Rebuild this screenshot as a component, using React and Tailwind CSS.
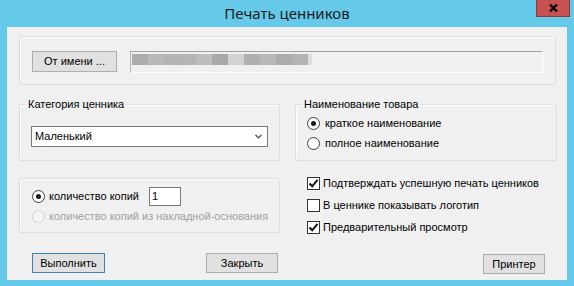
const blur = [
  "bg-[#acacac]",
  "bg-[#b9b9b9]",
  "bg-[#b4b4b4]",
  "bg-[#b5b5b5]",
  "bg-[#bdbdbd]",
  "bg-[#a9a9a9]",
  "bg-[#d2d2d2]",
  "bg-[#b0b0b0]",
  "bg-[#b8b8b8]",
  "bg-[#acacac]",
  "bg-[#b3b3b3]",
];

const Radio = ({ checked, disabled }) => (
  <span
    className={
      disabled
        ? "flex w-[13px] h-[13px] shrink-0 rounded-full border border-[#cfcfcf] bg-[#f4f4f4]"
        : "flex w-[13px] h-[13px] shrink-0 items-center justify-center rounded-full border border-[#3c3c3c] bg-white"
    }
  >
    {checked && <span className="w-[5px] h-[5px] rounded-full bg-[#1a1a1a]" />}
  </span>
);

const Check = ({ checked }) => (
  <span className="flex w-[13px] h-[13px] shrink-0 items-center justify-center border border-[#333] bg-white">
    {checked && (
      <svg width="11" height="11" viewBox="0 0 11 11">
        <path d="M1.5 5.5 L4.2 8.3 L9.5 1.8" fill="none" stroke="#111" strokeWidth="2" />
      </svg>
    )}
  </span>
);

const Group = ({ label, className, children }) => (
  <div className={`relative rounded-[3px] border border-[#d5dfe5] shadow-[inset_1px_1px_0_#fff] ${className}`}>
    {label && (
      <span className="absolute -top-[8px] left-[6px] bg-[#f0f0f0] px-[2px] leading-[14px]">{label}</span>
    )}
    {children}
  </div>
);

const Button = ({ children, primary, className }) => (
  <div
    className={`flex h-[20px] items-center justify-center border bg-[#e1e1e1] ${
      primary ? "border-[#3c7fb1]" : "border-[#adadad]"
    } ${className}`}
  >
    {children}
  </div>
);

export default function App() {
  return (
    <div className="flex h-[286px] w-[574px] flex-col whitespace-nowrap bg-[#65c9ea] font-['Liberation_Sans',Arial,sans-serif] text-[11px] text-black">
      {/* Title bar */}
      <div className="relative flex h-[27px] items-center justify-center">
        <span className="font-['Noto_Sans',sans-serif] text-[15px] text-[#1c1c1c]">Печать ценников</span>
        <div className="absolute top-0 right-[4px] flex h-[17px] w-[34px] items-center justify-center border border-t-0 border-[#8d3a3a] bg-[#c75050]">
          <svg width="9" height="8" viewBox="0 0 9 8">
            <path d="M1 0.5 L8 7.5 M8 0.5 L1 7.5" stroke="#000" strokeWidth="2.2" />
          </svg>
        </div>
      </div>

      {/* Client area */}
      <div className="mx-[7px] flex h-[253px] flex-col bg-[#f0f0f0] pt-[9px] pl-[12px] pr-[10px]">
        <Group className="flex h-[49px] w-[537px] items-center pt-[2px] pl-[12px]">
          <Button className="h-[21px] w-[85px]">От имени ...</Button>
          <div className="ml-[13px] flex h-[22px] w-[413px] border border-t-[#a0a0a0] border-l-[#b4b4b4] border-r-white border-b-white pt-[2px] pl-[1px]">
            <div className="flex h-[11px]">
              {blur.map((c, i) => (
                <span key={i} className={`h-full w-[16px] ${c}`} />
              ))}
              <span className="h-full w-[4px] bg-[#dcdcdc]" />
            </div>
          </div>
        </Group>

        <div className="mt-[19px] flex gap-[15px]">
          <Group label="Категория ценника" className="h-[57px] w-[261px] pt-[21px] pl-[11px]">
            <div className="flex h-[21px] w-[237px] items-center justify-between border border-[#7a7a7a] bg-white pl-[3px] pr-[5px]">
              <span>Маленький</span>
              <svg width="7" height="5" viewBox="0 0 7 5">
                <path d="M0.5 0.8 L3.5 3.8 L6.5 0.8" fill="none" stroke="#6d6d6d" strokeWidth="1.6" />
              </svg>
            </div>
          </Group>
          <Group label="Наименование товара" className="flex h-[57px] w-[262px] flex-col gap-[7px] pt-[12px] pl-[11px]">
            <div className="flex h-[13px] items-center gap-[5px]">
              <Radio checked />
              <span>краткое наименование</span>
            </div>
            <div className="flex h-[13px] items-center gap-[5px]">
              <Radio />
              <span>полное наименование</span>
            </div>
          </Group>
        </div>

        <div className="mt-[17px] flex gap-[15px]">
          <Group className="flex h-[55px] w-[261px] flex-col pt-[8px] pl-[12px]">
            <div className="flex h-[19px] items-center">
              <Radio checked />
              <span className="ml-[4px]">количество копий</span>
              <div className="ml-[10px] flex h-[19px] w-[32px] items-center border border-[#7a7a7a] bg-white pl-[2px]">1</div>
            </div>
            <div className="mt-[2px] flex h-[17px] items-center text-[#a0a0a0]">
              <Radio disabled />
              <span className="ml-[4px]">количество копий из накладной-основания</span>
            </div>
          </Group>
          <div className="-mt-[1px] flex flex-col gap-[9px] pl-[12px]">
            <div className="flex h-[13px] items-center gap-[3px]">
              <Check checked />
              <span>Подтверждать успешную печать ценников</span>
            </div>
            <div className="flex h-[13px] items-center gap-[3px]">
              <Check />
              <span>В ценнике показывать логотип</span>
            </div>
            <div className="flex h-[13px] items-center gap-[3px]">
              <Check checked />
              <span>Предварительный просмотр</span>
            </div>
          </div>
        </div>

        <div className="mt-[19px] flex w-[537px] items-start">
          <Button primary className="ml-[13px] w-[73px]">Выполнить</Button>
          <Button className="ml-[101px] w-[72px]">Закрыть</Button>
          <Button className="mt-[1px] ml-auto mr-[11px] w-[62px]">Принтер</Button>
        </div>
      </div>
    </div>
  );
}
